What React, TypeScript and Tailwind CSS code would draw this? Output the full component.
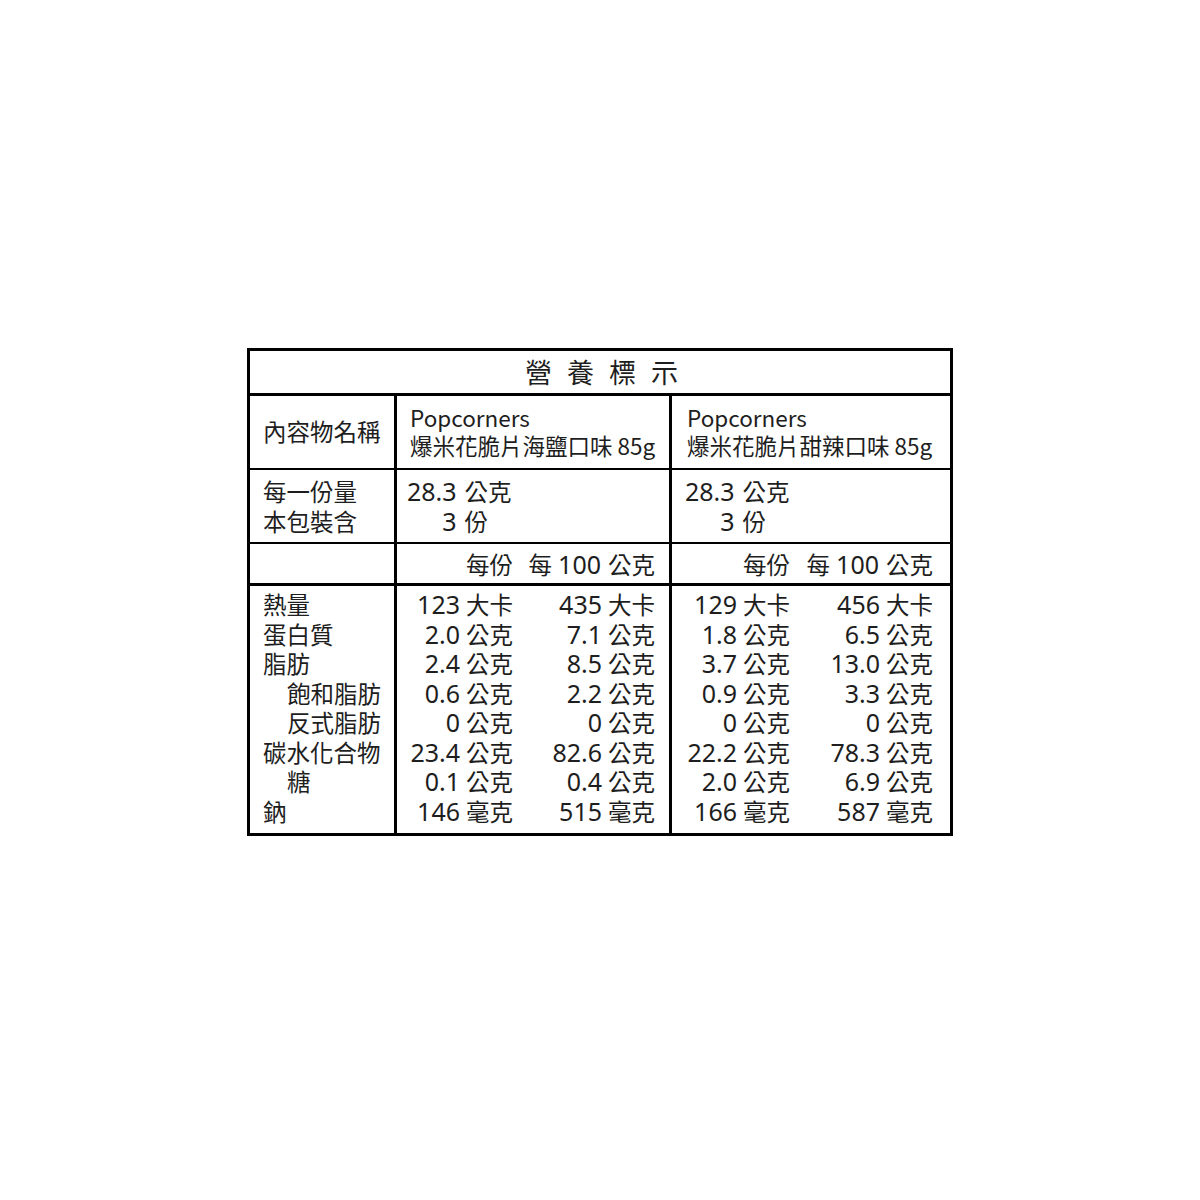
import React from "react";

type Row = {
  label: string;
  indent?: boolean;
  salt: [string, string];
  spicy: [string, string];
};

const rows: Row[] = [
  { label: "熱量", salt: ["123 大卡", "435 大卡"], spicy: ["129 大卡", "456 大卡"] },
  { label: "蛋白質", salt: ["2.0 公克", "7.1 公克"], spicy: ["1.8 公克", "6.5 公克"] },
  { label: "脂肪", salt: ["2.4 公克", "8.5 公克"], spicy: ["3.7 公克", "13.0 公克"] },
  { label: "飽和脂肪", indent: true, salt: ["0.6 公克", "2.2 公克"], spicy: ["0.9 公克", "3.3 公克"] },
  { label: "反式脂肪", indent: true, salt: ["0 公克", "0 公克"], spicy: ["0 公克", "0 公克"] },
  { label: "碳水化合物", salt: ["23.4 公克", "82.6 公克"], spicy: ["22.2 公克", "78.3 公克"] },
  { label: "糖", indent: true, salt: ["0.1 公克", "0.4 公克"], spicy: ["2.0 公克", "6.9 公克"] },
  { label: "鈉", salt: ["146 毫克", "515 毫克"], spicy: ["166 毫克", "587 毫克"] },
];

// digits use a wider latin face, like the label print
const Num = ({ children }: { children: React.ReactNode }) => (
  <span className="font-['Noto_Sans'] text-[25px]">{children}</span>
);

const Qty = ({ value }: { value: string }) => {
  const [num, unit] = value.split(" ");
  return (
    <span>
      <Num>{num}</Num>
      <span className="ml-[6px]">{unit}</span>
    </span>
  );
};

const Serving = () => (
  <div className="grid w-fit grid-cols-[auto_auto] auto-rows-[30px] items-center gap-x-[8px] leading-[30px]">
    <span className="text-right">
      <Num>28.3</Num>
    </span>
    <span>公克</span>
    <span className="text-right">
      <Num>3</Num>
    </span>
    <span>份</span>
  </div>
);

const ValueColumn = ({
  values,
  side,
}: {
  values: [string, string][];
  side: "salt" | "spicy";
}) => (
  <div
    className={
      side === "salt"
        ? "grid grid-cols-[116px_1fr] auto-rows-[29.5px] pr-[14px] text-right leading-[29.5px] whitespace-nowrap"
        : "grid grid-cols-[118px_1fr] auto-rows-[29.5px] pr-[17px] text-right leading-[29.5px] whitespace-nowrap"
    }
  >
    {values.map((pair, i) => (
      <React.Fragment key={i}>
        <Qty value={pair[0]} />
        <Qty value={pair[1]} />
      </React.Fragment>
    ))}
  </div>
);

const PerHeader = ({ side }: { side: "salt" | "spicy" }) => (
  <div
    className={
      side === "salt"
        ? "grid w-full grid-cols-[116px_1fr] pr-[14px] text-right leading-[30px] whitespace-nowrap"
        : "grid w-full grid-cols-[118px_1fr] pr-[17px] text-right leading-[30px] whitespace-nowrap"
    }
  >
    <span>每份</span>
    <span>
      每<span className="ml-[6px]"><Num>100</Num></span>
      <span className="ml-[7px]">公克</span>
    </span>
  </div>
);

export default function App() {
  return (
    <div
      className="min-h-[1200px] bg-white pt-[348px] text-[23.5px] text-[#1e1e1e]"
      style={{ fontFamily: '"Noto Sans CJK TC", "Noto Sans", sans-serif' }}
    >
      <div className="mx-auto w-[706px] border-[3px] border-black">
        <div className="grid grid-cols-[147px_275px_278px]">
          <div className="col-span-3 flex h-[45px] items-center justify-center border-b-[3px] border-black pl-[18px] text-[27px] tracking-[15px]">
            營養標示
          </div>

          <div className="flex h-[74px] items-center border-r-[3px] border-b-2 border-black pl-[13px] whitespace-nowrap">
            內容物名稱
          </div>
          <div className="h-[74px] border-r-[3px] border-b-2 border-black pl-[13px] pt-[7px] text-[22.5px] leading-[28px] whitespace-nowrap">
            <div>Popcorners</div>
            <div>爆米花脆片海鹽口味 85g</div>
          </div>
          <div className="h-[74px] border-b-2 border-black pl-[15px] pt-[7px] text-[22.5px] leading-[28px] whitespace-nowrap">
            <div>Popcorners</div>
            <div>爆米花脆片甜辣口味 85g</div>
          </div>

          <div className="flex h-[74px] flex-col justify-center border-r-[3px] border-b-2 border-black pl-[13px] leading-[30px]">
            <div>每一份量</div>
            <div>本包裝含</div>
          </div>
          <div className="flex h-[74px] items-center border-r-[3px] border-b-2 border-black pl-[10px]">
            <Serving />
          </div>
          <div className="flex h-[74px] items-center border-b-2 border-black pl-[13px]">
            <Serving />
          </div>

          <div className="h-[42px] border-r-[3px] border-b-[3px] border-black" />
          <div className="flex h-[42px] items-center border-r-[3px] border-b-[3px] border-black">
            <PerHeader side="salt" />
          </div>
          <div className="flex h-[42px] items-center border-b-[3px] border-black">
            <PerHeader side="spicy" />
          </div>

          <div className="grid h-[247px] auto-rows-[29.5px] content-start border-r-[3px] border-black pl-[13px] pt-[4px] leading-[29.5px] whitespace-nowrap">
            {rows.map((r) => (
              <div key={r.label} className={r.indent ? "pl-[24px]" : ""}>
                {r.label}
              </div>
            ))}
          </div>
          <div className="h-[247px] border-r-[3px] border-black pt-[4px]">
            <ValueColumn values={rows.map((r) => r.salt)} side="salt" />
          </div>
          <div className="h-[247px] pt-[4px]">
            <ValueColumn values={rows.map((r) => r.spicy)} side="spicy" />
          </div>
        </div>
      </div>
    </div>
  );
}
